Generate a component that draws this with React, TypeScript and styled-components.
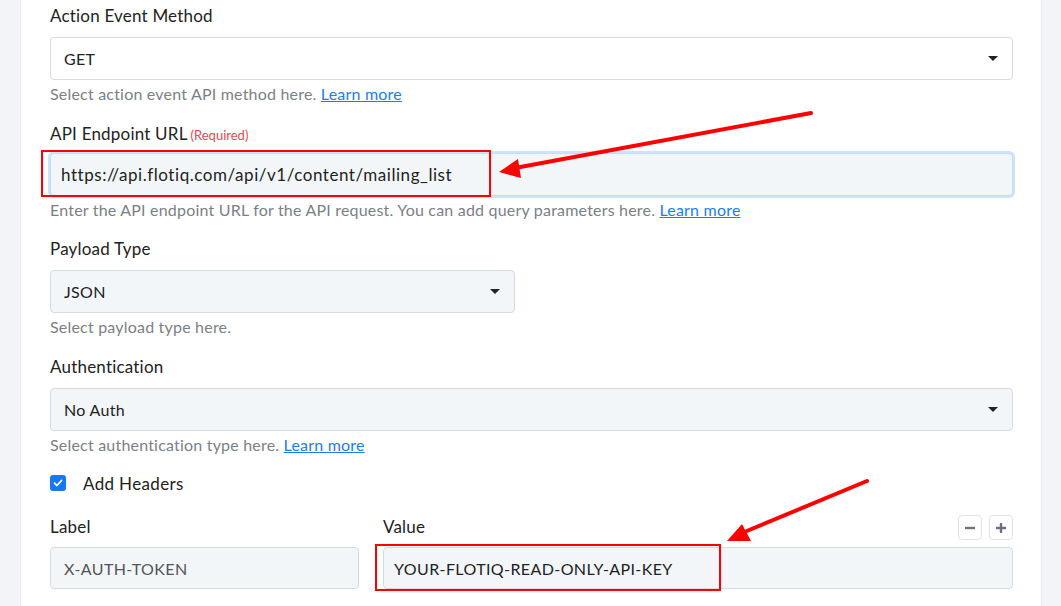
import React from "react";
import styled, { createGlobalStyle } from "styled-components";

const Global = createGlobalStyle`
  html, body { margin: 0; padding: 0; }
  body {
    background: #f2f4f7;
    font-family: Lato, "Open Sans", Arial, sans-serif;
    color: #222;
    width: 1061px;
    height: 606px;
    overflow: hidden;
  }
`;

const Page = styled.div`
  position: relative;
  width: 1061px;
  height: 606px;
  display: flex;
`;

const Panel = styled.div`
  margin-left: 20px;
  width: 1022px;
  background: #fff;
  border-left: 1px solid #e9ecf0;
  border-right: 1px solid #e6e9ee;
  box-sizing: border-box;
  padding: 6px 28px 0 29px;
  display: flex;
  flex-direction: column;
`;

const Field = styled.div<{ $tight?: boolean }>`
  display: flex;
  flex-direction: column;
  margin-bottom: ${(p) => (p.$tight ? "19px" : "20px")};
`;

const Label = styled.div`
  display: flex;
  align-items: baseline;
  height: 20px;
  font-size: 17px;
  letter-spacing: 0.2px;
  line-height: 20px;
  color: #222;
  margin-bottom: 11px;
`;

const Req = styled.span`
  color: #e5484d;
  font-size: 13px;
  line-height: 20px;
  letter-spacing: 0;
  margin-left: 3px;
`;

const SelectBox = styled.div<{ $white?: boolean; $width?: string; $focused?: boolean; $wide?: boolean }>`
  box-sizing: border-box;
  height: 43px;
  width: ${(p) => p.$width || "963px"};
  margin-top: ${(p) => (p.$focused ? "-2px" : "0")};
  border: 1px solid ${(p) => (p.$focused ? "#c3dcf7" : "#d6dbe2")};
  box-shadow: ${(p) => (p.$focused ? "0 0 0 2px #cfe3fa" : "none")};
  border-radius: 4px;
  background: ${(p) => (p.$white ? "#fff" : "#f3f6f9")};
  display: flex;
  align-items: center;
  justify-content: space-between;
  padding: 0 14px 0 ${(p) => (p.$focused ? "10px" : "13px")};
  font-size: ${(p) => (p.$wide ? "17px" : "16px")};
  letter-spacing: ${(p) => (p.$wide ? "0.55px" : "0.3px")};
  color: #222;
`;

const Caret = styled.span`
  width: 0;
  height: 0;
  border-left: 5px solid transparent;
  border-right: 5px solid transparent;
  border-top: 5px solid #222;
`;

const Hint = styled.div`
  margin-top: 4px;
  font-size: 16px;
  letter-spacing: 0.2px;
  line-height: 20px;
  color: #7b7f86;
`;

const Link = styled.a`
  color: #1a7ef2;
  text-decoration: underline;
  cursor: pointer;
`;

const CheckRow = styled.div`
  display: flex;
  align-items: center;
  gap: 17px;
  height: 20px;
  margin-top: -2px;
  margin-bottom: 22px;
  font-size: 17px;
  letter-spacing: 0.35px;
`;

const CheckBox = styled.span`
  width: 16px;
  height: 16px;
  border-radius: 3px;
  background: #1877f2;
  display: inline-flex;
  align-items: center;
  justify-content: center;
`;

const HeaderGrid = styled.div`
  display: grid;
  grid-template-columns: 309px 630px;
  column-gap: 24px;
`;

const HeadCell = styled.div`
  display: flex;
  align-items: flex-end;
  justify-content: space-between;
  height: 32px;
  box-sizing: border-box;
  font-size: 17px;
  letter-spacing: 0.2px;
  line-height: 20px;
  color: #222;
`;

const HeadText = styled.span`
  margin-bottom: 10px;
`;

const Buttons = styled.div`
  display: flex;
  gap: 7px;
  margin-bottom: 7px;
`;

const IconBtn = styled.span`
  width: 24px;
  height: 25px;
  box-sizing: border-box;
  border: 1px solid #dfe3e8;
  border-radius: 4px;
  background: #fff;
  display: inline-flex;
  align-items: center;
  justify-content: center;
`;

const TextInput = styled.div<{ $dark?: boolean }>`
  box-sizing: border-box;
  height: 42px;
  border: 1px solid #d6dbe2;
  border-radius: 4px;
  background: #f3f6f9;
  display: flex;
  align-items: center;
  padding: 0 12px 0 ${(p) => (p.$dark ? "10px" : "13px")};
  font-size: 16px;
  letter-spacing: 0.4px;
  color: ${(p) => (p.$dark ? "#222" : "#555")};
`;

const Overlay = styled.svg`
  position: absolute;
  left: 0;
  top: 0;
  width: 1061px;
  height: 606px;
  pointer-events: none;
`;

export default function App() {
  return (
    <>
      <Global />
      <Page>
        <Panel>
          <Field>
            <Label>Action Event Method</Label>
            <SelectBox $white>
              <span>GET</span>
              <Caret />
            </SelectBox>
            <Hint>
              Select action event API method here. <Link>Learn more</Link>
            </Hint>
          </Field>
          <Field $tight>
            <Label>
              API Endpoint URL<Req>(Required)</Req>
            </Label>
            <SelectBox $focused $wide>
              <span>https://api.flotiq.com/api/v1/content/mailing_list</span>
            </SelectBox>
            <Hint>
              Enter the API endpoint URL for the API request. You can add query parameters here.{" "}
              <Link>Learn more</Link>
            </Hint>
          </Field>
          <Field>
            <Label>Payload Type</Label>
            <SelectBox $width="465px">
              <span>JSON</span>
              <Caret />
            </SelectBox>
            <Hint>Select payload type here.</Hint>
          </Field>
          <Field>
            <Label>Authentication</Label>
            <SelectBox>
              <span>No Auth</span>
              <Caret />
            </SelectBox>
            <Hint>
              Select authentication type here. <Link>Learn more</Link>
            </Hint>
          </Field>
          <CheckRow>
            <CheckBox>
              <svg width="10" height="8" viewBox="0 0 10 8">
                <path d="M1.5 4.2 L4 6.5 L8.5 1.5" fill="none" stroke="#fff" strokeWidth="1.8" strokeLinecap="round" strokeLinejoin="round" />
              </svg>
            </CheckBox>
            <span>Add Headers</span>
          </CheckRow>
          <HeaderGrid>
            <HeadCell>
              <HeadText>Label</HeadText>
            </HeadCell>
            <HeadCell>
              <HeadText>Value</HeadText>
              <Buttons>
                <IconBtn>
                  <svg width="12" height="12" viewBox="0 0 12 12">
                    <path d="M1 6 H11" stroke="#6b7280" strokeWidth="2.4" />
                  </svg>
                </IconBtn>
                <IconBtn>
                  <svg width="12" height="12" viewBox="0 0 12 12">
                    <path d="M1 6 H11 M6 1 V11" stroke="#6b7280" strokeWidth="2.4" />
                  </svg>
                </IconBtn>
              </Buttons>
            </HeadCell>
            <TextInput>X-AUTH-TOKEN</TextInput>
            <TextInput $dark>YOUR-FLOTIQ-READ-ONLY-API-KEY</TextInput>
          </HeaderGrid>
        </Panel>
        <Overlay viewBox="0 0 1061 606">
          <rect x="42" y="151" width="448" height="45" fill="none" stroke="#f00" strokeWidth="2" />
          <rect x="376" y="545" width="344" height="45" fill="none" stroke="#f00" strokeWidth="2" />
          <line x1="811" y1="113" x2="515" y2="168" stroke="#f00" strokeWidth="4" strokeLinecap="round" />
          <polygon points="499,172 518,159 521,178" fill="#f00" />
          <line x1="867" y1="481" x2="742" y2="533" stroke="#f00" strokeWidth="4" strokeLinecap="round" />
          <polygon points="727,541 742,524 751,541" fill="#f00" />
        </Overlay>
      </Page>
    </>
  );
}
